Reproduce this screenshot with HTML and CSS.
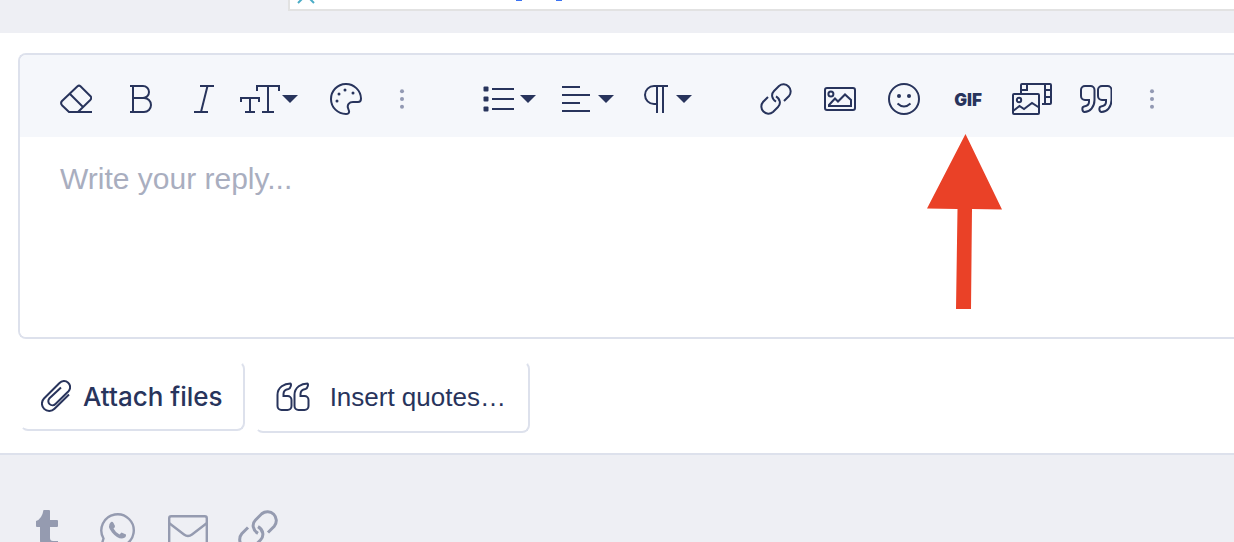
FILE: index.html
```html
<!DOCTYPE html>
<html lang="en">
<head>
  <meta charset="UTF-8">
  <title>Reply</title>
  <link rel="stylesheet" href="styles.css">
</head>
<body>
  <div class="thread">
    <div class="post-card">
      <svg class="post-icon" width="20" height="4" viewBox="0 0 20 4"><path d="M2 3L7-2M18 3L13-2"/></svg>
      <svg class="post-link" width="46" height="4" viewBox="0 0 46 4"><path d="M0 0H6M40 0H46"/></svg>
    </div>
  </div>

  <form class="reply">
    <div class="editor">
      <div class="toolbar">
        <div class="group">
          <button type="button" class="tool" aria-label="Remove formatting">
            <svg width="32" height="32" viewBox="0 0 32 32"><path d="M32 29H9L2 22.200Q0.200 20 2 18L17.500 3.200Q19 2 20.500 3.200L30.500 13.200Q32 15 30.500 16.700L18 29M10 11L23 24"/></svg>
          </button>
          <button type="button" class="tool" aria-label="Bold">
            <svg width="32" height="32" viewBox="0 0 32 32"><path d="M6 3H19a6 6 0 0 1 0 12H9M9 3V29M6 29H20a7 7 0 0 0 0-14"/></svg>
          </button>
          <button type="button" class="tool" aria-label="Italic">
            <svg width="32" height="32" viewBox="0 0 32 32"><path d="M12 3H26M6 29H20M19.500 3L13 29"/></svg>
          </button>
          <button type="button" class="tool dropdown" aria-label="Font size">
            <svg width="60" height="32" viewBox="0 0 60 32"><path d="M17 8V3H39V8M28 3V29M22 29H34M1 19V15H19V19M10 15V29M5 29H15"/><path class="fill" d="M42 12H58L50 20z"/></svg>
          </button>
          <button type="button" class="tool" aria-label="Text color">
            <svg width="32" height="32" viewBox="0 0 32 32"><path d="M16 31A15 15 0 1 1 31 15.500C31 18 30 19 28 19H23C19 19 17 22 18 25L19 28C19.500 30 18 31 16 31z"/><g class="fill"><circle cx="15" cy="7" r="1.500"/><circle cx="23" cy="10" r="1.500"/><circle cx="9" cy="11" r="1.500"/><circle cx="7" cy="18" r="1.500"/></g></svg>
          </button>
          <button type="button" class="tool more" aria-label="More text options">
            <svg width="8" height="32" viewBox="0 0 8 32"><circle cx="4" cy="8.300" r="2"/><circle cx="4" cy="16" r="2"/><circle cx="4" cy="23.700" r="2"/></svg>
          </button>
        </div>
        <div class="group group-paragraph">
          <button type="button" class="tool dropdown" aria-label="List">
            <svg width="60" height="32" viewBox="0 0 60 32"><path d="M9 6H31M9 16H31M9 26H31"/><g class="fill"><rect x="0.500" y="3.500" width="5" height="5" rx="1"/><rect x="0.500" y="13.500" width="5" height="5" rx="1"/><rect x="0.500" y="23.500" width="5" height="5" rx="1"/><path d="M37 12H53L45 20z"/></g></svg>
          </button>
          <button type="button" class="tool dropdown" aria-label="Alignment">
            <svg width="60" height="32" viewBox="0 0 60 32"><path d="M1 4H19M1 12H29M1 20H19M1 28H29"/><path class="fill" d="M37 12H53L45 20z"/></svg>
          </button>
          <button type="button" class="tool dropdown" aria-label="Paragraph format">
            <svg width="60" height="32" viewBox="0 0 60 32"><path d="M29 3H15A9 9 0 0 0 15 21H18M18 3V30M24 3V30"/><path class="fill" d="M37 12H53L45 20z"/></svg>
          </button>
        </div>
        <div class="group">
          <button type="button" class="tool" aria-label="Insert link">
            <svg width="32" height="32" viewBox="0 0 32 32"><path id="chain" d="M24 18L29 13A7.100 7.100 0 0 0 19 3L14 8C11 11 11.500 16 16 18.700M8 14L3 19A7.100 7.100 0 0 0 13 29L18 24C21 21 20.500 16 16 13.300"/></svg>
          </button>
          <button type="button" class="tool" aria-label="Insert image">
            <svg width="32" height="32" viewBox="0 0 32 32"><rect x="1" y="5" width="30" height="22" rx="2"/><circle cx="6.900" cy="11" r="2.500"/><path d="M5 22L11 15.500L14 18.500L21 11.500L27 17V23H5z"/></svg>
          </button>
          <button type="button" class="tool" aria-label="Smilies">
            <svg width="32" height="32" viewBox="0 0 32 32"><circle cx="16" cy="16" r="15"/><path d="M9.500 20.500Q16 26.500 22.500 20.500"/><g class="fill"><circle cx="11" cy="13" r="2"/><circle cx="21" cy="13" r="2"/></g></svg>
          </button>
          <button type="button" class="tool gif">GIF</button>
          <button type="button" class="tool" aria-label="Media">
            <svg width="40" height="32" viewBox="0 0 40 32"><rect x="1" y="11" width="26" height="20" rx="1"/><circle cx="7" cy="17" r="2.200"/><path d="M1 28L7.500 23L12 26L20 20L27 24.500M9 11V2Q9 1 10 1H38Q39 1 39 2V20Q39 21 38 21H30M33 1V21M33 7H39M33 14H39M15 1V7H9"/></svg>
          </button>
          <button type="button" class="tool" aria-label="Quote">
            <svg width="32" height="32" viewBox="0 0 32 32"><g id="quote"><path d="M5 3H10.500A4 4 0 0 1 14.500 7V17C14.500 24 10 29 4.500 29C2 29 1.500 24 4 23.500C7 23 9 21.500 9 19V17H5A4 4 0 0 1 1 13V7A4 4 0 0 1 5 3z"/><path d="M22 3H27.500A4 4 0 0 1 31.500 7V17C31.500 24 27 29 21.500 29C19 29 18.500 24 21 23.500C24 23 26 21.500 26 19V17H22A4 4 0 0 1 18 13V7A4 4 0 0 1 22 3z"/></g></svg>
          </button>
          <button type="button" class="tool more" aria-label="More insert options">
            <svg width="8" height="32" viewBox="0 0 8 32"><circle cx="4" cy="8.300" r="2"/><circle cx="4" cy="16" r="2"/><circle cx="4" cy="23.700" r="2"/></svg>
          </button>
        </div>
      </div>
      <textarea class="message" aria-label="Message" placeholder="Write your reply..."></textarea>
      <svg class="arrow" width="76" height="176" viewBox="0 0 76 176"><path d="M38.500 0L75 75.500L45 75L44 175H29L30.500 75L0 74.500z"/></svg>
    </div>

    <div class="actions">
      <button type="button" class="action attach">
        <svg width="30" height="32" viewBox="0 0 30 32"><path d="M28 14.500L13.500 28.700A7.300 7.300 0 0 1 3 18.500L18.500 3A6 6 0 0 1 27.500 11.300L14.500 24A4 4 0 0 1 8.500 18.200L20 7.500"/></svg>
        Attach files
      </button>
      <button type="button" class="action insert">
        <svg width="34" height="32" viewBox="0 0 33 32"><path d="M14 2.500C8 2.500 1 6 1 14V25A4 4 0 0 0 5 29H11A4 4 0 0 0 15 25V19A4 4 0 0 0 11 15H7V13C7 10 9 8.500 12 8C14.500 7.500 15 2.500 14 2.500z"/><path d="M31 2.500C25 2.500 18 6 18 14V25A4 4 0 0 0 22 29H28A4 4 0 0 0 32 25V19A4 4 0 0 0 28 15H24V13C24 10 26 8.500 29 8C31.500 7.500 32 2.500 31 2.500z"/></svg>
        Insert quotes…
      </button>
    </div>
  </form>

  <div class="share">
    <a href="#" aria-label="Tumblr">
      <svg width="40" height="40" viewBox="0 0 40 40"><path class="fill" d="M15.500 0H21Q22 0 22 1V10H29Q30 10 30 11V16Q30 17 29 17H22V28Q22 31 25 31H30V37Q27 39 22 39Q12 39 12 30V17H9Q8 17 8 16V11Q14 9 15.500 0z"/></svg>
    </a>
    <a href="#" aria-label="WhatsApp">
      <svg width="40" height="40" viewBox="0 0 40 40"><path d="M3 37L5.500 28.500A16.200 16.200 0 1 1 11.500 34.500z"/><path class="fill" d="M13 12Q14.500 11 15.500 13L17 16Q17 17.500 15.500 18.500Q17.500 22.500 21.500 24.500L23.500 22.500L28 24.500Q28.500 28 24 28.500Q19 28.500 14 22.500Q8.500 16 13 12z"/></svg>
    </a>
    <a href="#" aria-label="Email">
      <svg width="40" height="40" viewBox="0 0 40 40"><rect x="1.200" y="6.200" width="37.600" height="29" rx="2"/><path d="M1 13L16 24.500Q20 27.500 24 24.500L39 13"/></svg>
    </a>
    <a href="#" aria-label="Link">
      <svg width="40" height="40" viewBox="0 0 32 32"><use href="#chain"/></svg>
    </a>
  </div>
</body>
</html>
```
FILE: styles.css
```css
/* Base */
* { box-sizing: border-box; }
body {
  margin: 0;
  height: 100vh;
  overflow: hidden;
  background: #eeeff4;
  color: #28345c;
  font-family: "Liberation Sans", Arial, sans-serif;
}
button {
  border: none;
  background: none;
  color: inherit;
  cursor: pointer;
}
svg {
  display: block;
  flex: none;
  fill: none;
  stroke: currentColor;
  stroke-width: 2;
}
.fill {
  fill: currentColor;
  stroke: none;
}

/* End of the post above */
.thread {
  height: 33px;
  padding-left: 288px;
}
.post-card {
  display: flex;
  gap: 200px;
  height: 11px;
  padding-left: 6px;
  background: #fff;
  border: 2px solid #e2e2e2;
  border-width: 0 0 2px 2px;
}
.post-icon { color: #4bacc6; }
.post-link {
  color: #3b72f2;
}

/* Reply form */
.reply {
  padding: 20px 0 20px 18px;
  background: #fff;
  border-bottom: 2px solid #dde1ec;
}
.editor {
  position: relative;
  border: 2px solid #dde1ec;
  border-right: none;
  border-radius: 8px 0 0 8px;
  overflow: hidden;
}
.toolbar {
  display: flex;
  height: 82px;
  padding: 6px 0 0 24px;
  background: #f5f7fb;
}
.group {
  display: flex;
  margin-right: 31px;
}
.group-paragraph { padding-left: 22px; }
.tool {
  display: flex;
  align-items: center;
  justify-content: center;
  flex: none;
  width: 64px;
  padding: 0;
}
.dropdown {
  width: 78px;
  justify-content: flex-start;
  padding-left: 4px;
}
.more {
  width: 48px;
  color: #9299b3;
}
.more svg {
  fill: currentColor;
  stroke: none;
}
.gif {
  padding-top: 2px;
  font-family: Inter, sans-serif;
  font-size: 17px;
  font-weight: 900;
}
.message {
  display: block;
  width: 100%;
  height: 200px;
  padding: 24px 40px;
  border: none;
  outline: none;
  resize: none;
  background: #fff;
  color: inherit;
  font-family: inherit;
  font-size: 30px;
  line-height: 36px;
}
.message::placeholder { color: #a9aebf; }
.arrow {
  position: absolute;
  top: 79px;
  left: 907px;
  fill: #ea4127;
  stroke: none;
}

/* Buttons below the editor */
.actions {
  display: flex;
  align-items: flex-start;
  gap: 10px;
  margin-top: 22px;
  padding-left: 2px;
}
.action {
  display: flex;
  align-items: center;
  height: 70px;
  padding: 0 20px 0 19px;
  border: 2px solid transparent;
  border-right-color: #dde1ec;
  border-bottom-color: #dde1ec;
  border-radius: 8px;
  font-size: 26px;
}
.attach {
  gap: 12px;
  font-family: Inter, sans-serif;
  font-weight: 500;
}
.insert {
  gap: 20px;
  height: 72px;
  padding-right: 22px;
  font-family: inherit;
}

/* Share links */
.share {
  display: flex;
  gap: 30px;
  padding: 55px 28px 0;
}
.share a { color: #959bb0; }
.share svg { stroke-width: 2.400; }
```
